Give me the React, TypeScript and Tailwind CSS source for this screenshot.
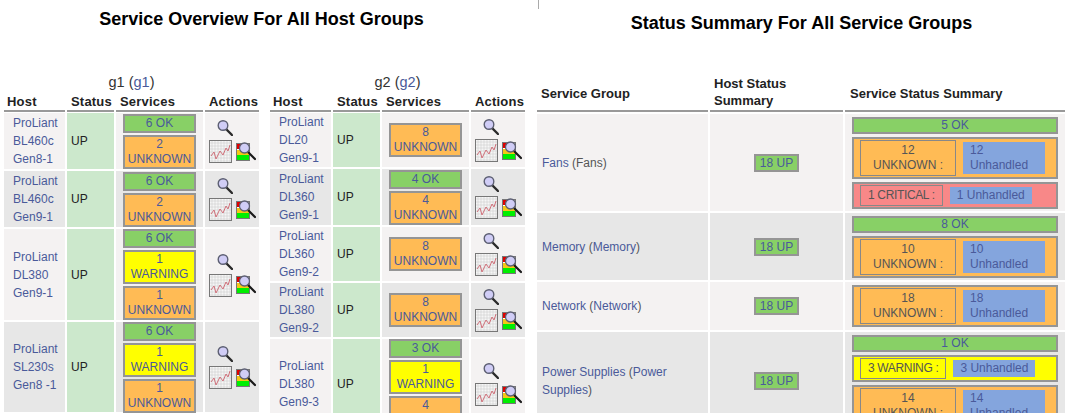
import React from 'react'

const linkText = 'text-[#4a5a9a]'

function Magnifier() {
  return (
    <svg width="16" height="17" viewBox="0 0 16 17" className="block">
      <line x1="9.5" y1="10.5" x2="15" y2="16" stroke="#2a2a2a" strokeWidth="2.4" strokeLinecap="round" />
      <circle cx="6" cy="6.5" r="4.8" fill="#d0cdf6" stroke="#5c5f72" strokeWidth="1.4" />
    </svg>
  )
}

function ChartIcon() {
  const lines = [3, 6, 9, 12, 15, 18, 21]
  return (
    <svg width="23" height="23" viewBox="0 0 23 23" className="block">
      <rect x="0.5" y="0.5" width="22" height="22" fill="#f6f6f6" stroke="#777" />
      {lines.map((n) => (
        <g key={n} stroke="#c6c6c6" strokeWidth="0.5">
          <line x1={n} y1="1" x2={n} y2="22" />
          <line x1="1" y1={n} x2="22" y2={n} />
        </g>
      ))}
      <polyline points="2,16 5,12 7,19 11,11 14,15 17,8 19,11 21,5" fill="none" stroke="#d0707a" strokeWidth="1" />
    </svg>
  )
}

function StatusIcon() {
  return (
    <svg width="20" height="20" viewBox="0 0 20 20" className="block">
      <rect x="0.5" y="1.5" width="13" height="17" fill="#fff" stroke="#777" />
      <rect x="1" y="2" width="4" height="5" fill="#e00000" />
      <rect x="1" y="8" width="12" height="5" fill="#f6c814" />
      <rect x="1" y="13" width="12" height="5" fill="#00ee00" />
      <line x1="12.5" y1="10.5" x2="19" y2="17" stroke="#1a1a1a" strokeWidth="2.2" strokeLinecap="round" />
      <circle cx="8.5" cy="6" r="5" fill="#d0cdf6" stroke="#5c5f72" strokeWidth="1.3" />
    </svg>
  )
}

type Tone = 'ok' | 'warn' | 'unknown'

const toneClass: Record<Tone, string> = {
  ok: 'bg-[#88d066]',
  warn: 'bg-[#ffff00]',
  unknown: 'bg-[#ffbb55]',
}

function Badge({ tone, count, label }: { tone: Tone; count: string; label: string }) {
  return (
    <div className={`w-[73px] border-2 border-[#959595] text-center leading-[15px] ${linkText} ${toneClass[tone]}`}>
      {tone === 'ok' ? (
        `${count} ${label}`
      ) : (
        <>
          {count}
          <br />
          {label}
        </>
      )}
    </div>
  )
}

type HostRow = {
  name: string[]
  height: string
  stripe: string
  badges: [Tone, string, string][]
}

const OK = 'OK'
const UNK = 'UNKNOWN'
const WARN = 'WARNING'
const odd = 'bg-[#f4f2f2]'
const even = 'bg-[#e7e7e7]'

const g1Rows: HostRow[] = [
  { name: ['ProLiant', 'BL460c', 'Gen8-1'], height: 'h-[56px]', stripe: odd, badges: [['ok', '6', OK], ['unknown', '2', UNK]] },
  { name: ['ProLiant', 'BL460c', 'Gen9-1'], height: 'h-[56px]', stripe: even, badges: [['ok', '6', OK], ['unknown', '2', UNK]] },
  { name: ['ProLiant', 'DL380', 'Gen9-1'], height: 'h-[91px]', stripe: odd, badges: [['ok', '6', OK], ['warn', '1', WARN], ['unknown', '1', UNK]] },
  { name: ['ProLiant', 'SL230s', 'Gen8 -1'], height: 'h-[90px]', stripe: even, badges: [['ok', '6', OK], ['warn', '1', WARN], ['unknown', '1', UNK]] },
]

const g2Rows: HostRow[] = [
  { name: ['ProLiant', 'DL20', 'Gen9-1'], height: 'h-[54px]', stripe: odd, badges: [['unknown', '8', UNK]] },
  { name: ['ProLiant', 'DL360', 'Gen9-1'], height: 'h-[56px]', stripe: even, badges: [['ok', '4', OK], ['unknown', '4', UNK]] },
  { name: ['ProLiant', 'DL360', 'Gen9-2'], height: 'h-[54px]', stripe: odd, badges: [['unknown', '8', UNK]] },
  { name: ['ProLiant', 'DL380', 'Gen9-2'], height: 'h-[54px]', stripe: even, badges: [['unknown', '8', UNK]] },
  { name: ['ProLiant', 'DL380', 'Gen9-3'], height: 'h-[90px]', stripe: odd, badges: [['ok', '3', OK], ['warn', '1', WARN], ['unknown', '4', UNK]] },
]

function HostTable({ group, rows }: { group: string; rows: HostRow[] }) {
  return (
    <div className="w-[255px] shrink-0">
      <div className="h-[18px] text-center text-[14.5px] leading-[16px] text-[#333]">
        {group} (<span className={linkText}>{group}</span>)
      </div>
      <div className="flex h-[20px] gap-[2px] text-[13px] font-bold tracking-[0.2px] text-[#222]">
        <div className="w-[61px] border-b-2 border-[#999] pl-[3px]">Host</div>
        <div className="w-[47px] border-b-2 border-[#999] pl-[4px]">Status</div>
        <div className="w-[87px] border-b-2 border-[#999] pl-[4px]">Services</div>
        <div className="w-[54px] border-b-2 border-[#999] pl-[4px]">Actions</div>
      </div>
      <div className="mt-[1px] flex flex-col gap-[2px]">
        {rows.map((row, i) => (
          <div key={i} className={`flex shrink-0 gap-[2px] ${row.height}`}>
            <div className={`flex w-[61px] items-center pl-[9px] leading-[18px] ${linkText} ${row.stripe}`}>
              <div>
                {row.name.map((part) => (
                  <div key={part}>{part}</div>
                ))}
              </div>
            </div>
            <div className="flex w-[47px] items-center bg-[#cce8cc] pl-[4px] text-[#222]">UP</div>
            <div className={`flex w-[87px] flex-col items-center justify-center gap-[2px] ${row.stripe}`}>
              {row.badges.map(([tone, count, label]) => (
                <Badge key={tone} tone={tone} count={count} label={label} />
              ))}
            </div>
            <div className={`flex w-[54px] flex-col justify-center pl-[4px] ${row.stripe}`}>
              <div className="mb-[4px] ml-[8px]">
                <Magnifier />
              </div>
              <div className="flex items-center gap-[4px]">
                <ChartIcon />
                <StatusIcon />
              </div>
            </div>
          </div>
        ))}
      </div>
    </div>
  )
}

type Summary = { tone: 'warn' | 'unknown' | 'crit'; count: string; label: string }

const summaryBg = {
  warn: 'bg-[#ffff00]',
  unknown: 'bg-[#ffbb55]',
  crit: 'bg-[#f88888]',
}

function SummaryBar({ tone, count, label }: Summary) {
  const twoLine = tone === 'unknown'
  return (
    <div className={`flex items-center gap-[7px] border-2 border-[#959595] py-[1px] pl-[6px] ${summaryBg[tone]}`}>
      {twoLine ? (
        <>
          <div className="w-[96px] border border-[#888] py-[2px] text-center leading-[15px] text-[#555]">
            {count}
            <br />
            {label} :
          </div>
          <div className={`w-[82px] bg-[#84a5dd] py-[1px] pl-[7px] leading-[15px] ${linkText}`}>
            {count}
            <br />
            Unhandled
          </div>
        </>
      ) : (
        <>
          <div className="border border-[#888] px-[7px] py-[2px] leading-[15px] tracking-[-0.35px] text-[#555]">
            {count} {label} :
          </div>
          <div className={`bg-[#84a5dd] px-[7px] py-[1px] leading-[15px] ${linkText}`}>
            {count} Unhandled
          </div>
        </>
      )}
    </div>
  )
}

type GroupRow = {
  name: string
  alias: React.ReactNode
  height: string
  stripe: string
  ok: string
  bars: Summary[]
}

const groups: GroupRow[] = [
  {
    name: 'Fans',
    alias: <span className="text-[#555]">(Fans)</span>,
    height: 'h-[97px]',
    stripe: odd,
    ok: '5 OK',
    bars: [
      { tone: 'unknown', count: '12', label: UNK },
      { tone: 'crit', count: '1', label: 'CRITICAL' },
    ],
  },
  {
    name: 'Memory',
    alias: <>(<span className={linkText}>Memory</span>)</>,
    height: 'h-[67px]',
    stripe: even,
    ok: '8 OK',
    bars: [{ tone: 'unknown', count: '10', label: UNK }],
  },
  {
    name: 'Network',
    alias: <>(<span className={linkText}>Network</span>)</>,
    height: 'h-[48px]',
    stripe: odd,
    bars: [{ tone: 'unknown', count: '18', label: UNK }],
    ok: '',
  },
  {
    name: 'Power Supplies',
    alias: <>(<span className={linkText}>Power Supplies</span>)</>,
    height: 'h-[98px]',
    stripe: even,
    ok: '1 OK',
    bars: [
      { tone: 'warn', count: '3', label: WARN },
      { tone: 'unknown', count: '14', label: UNK },
    ],
  },
]

function GroupTable() {
  return (
    <div className="mt-[37px]">
      <div className="flex h-[38px] gap-[2px] text-[13px] font-bold text-[#222]">
        <div className="flex w-[171px] items-center border-b-2 border-[#999] pl-[4px] pt-[3px]">Service Group</div>
        <div className="flex w-[133px] items-center border-b-2 border-[#999] pl-[4px] leading-[17px]">
          Host Status
          <br />
          Summary
        </div>
        <div className="flex w-[220px] items-center border-b-2 border-[#999] pl-[5px] pt-[3px]">Service Status Summary</div>
      </div>
      <div className="mt-[2px] flex flex-col gap-[2px]">
        {groups.map((g) => (
          <div key={g.name} className={`flex shrink-0 gap-[2px] ${g.height}`}>
            <div className={`flex w-[171px] items-center pl-[5px] pr-[20px] leading-[18px] text-[#555] ${g.stripe}`}>
              <div>
                <span className={linkText}>{g.name}</span> {g.alias}
              </div>
            </div>
            <div className={`flex w-[133px] items-center justify-center ${g.stripe}`}>
              <div className={`border-2 border-[#959595] bg-[#88d066] px-[4px] leading-[14px] ${linkText}`}>18 UP</div>
            </div>
            <div className={`flex w-[220px] flex-col justify-center gap-[3px] px-[7px] ${g.stripe}`}>
              {g.ok && (
                <div className={`border-2 border-[#959595] bg-[#88d066] text-center leading-[13px] ${linkText}`}>{g.ok}</div>
              )}
              {g.bars.map((bar) => (
                <SummaryBar key={bar.tone} {...bar} />
              ))}
            </div>
          </div>
        ))}
      </div>
    </div>
  )
}

export default function App() {
  return (
    <div className="flex h-[413px] w-[1068px] overflow-hidden bg-white font-['Liberation_Sans',Arial,sans-serif] text-[12px]">
      {/* Host groups */}
      <div className="w-[537px] shrink-0 pl-[4px]">
        <h1 className="h-[38px] pr-[18px] text-center text-[18px] leading-[38px] font-bold text-black">
          Service Overview For All Host Groups
        </h1>
        <div className="mt-[36px] flex gap-[11px]">
          <HostTable group="g1" rows={g1Rows} />
          <HostTable group="g2" rows={g2Rows} />
        </div>
      </div>

      {/* Service groups */}
      <div className="flex-1">
        <div className="ml-[1px] h-[9px] w-px bg-[#aaa]" />
        <h1 className="h-[28px] pr-[2px] text-center text-[18px] leading-[28px] font-bold text-black">
          Status Summary For All Service Groups
        </h1>
        <GroupTable />
      </div>
    </div>
  )
}
